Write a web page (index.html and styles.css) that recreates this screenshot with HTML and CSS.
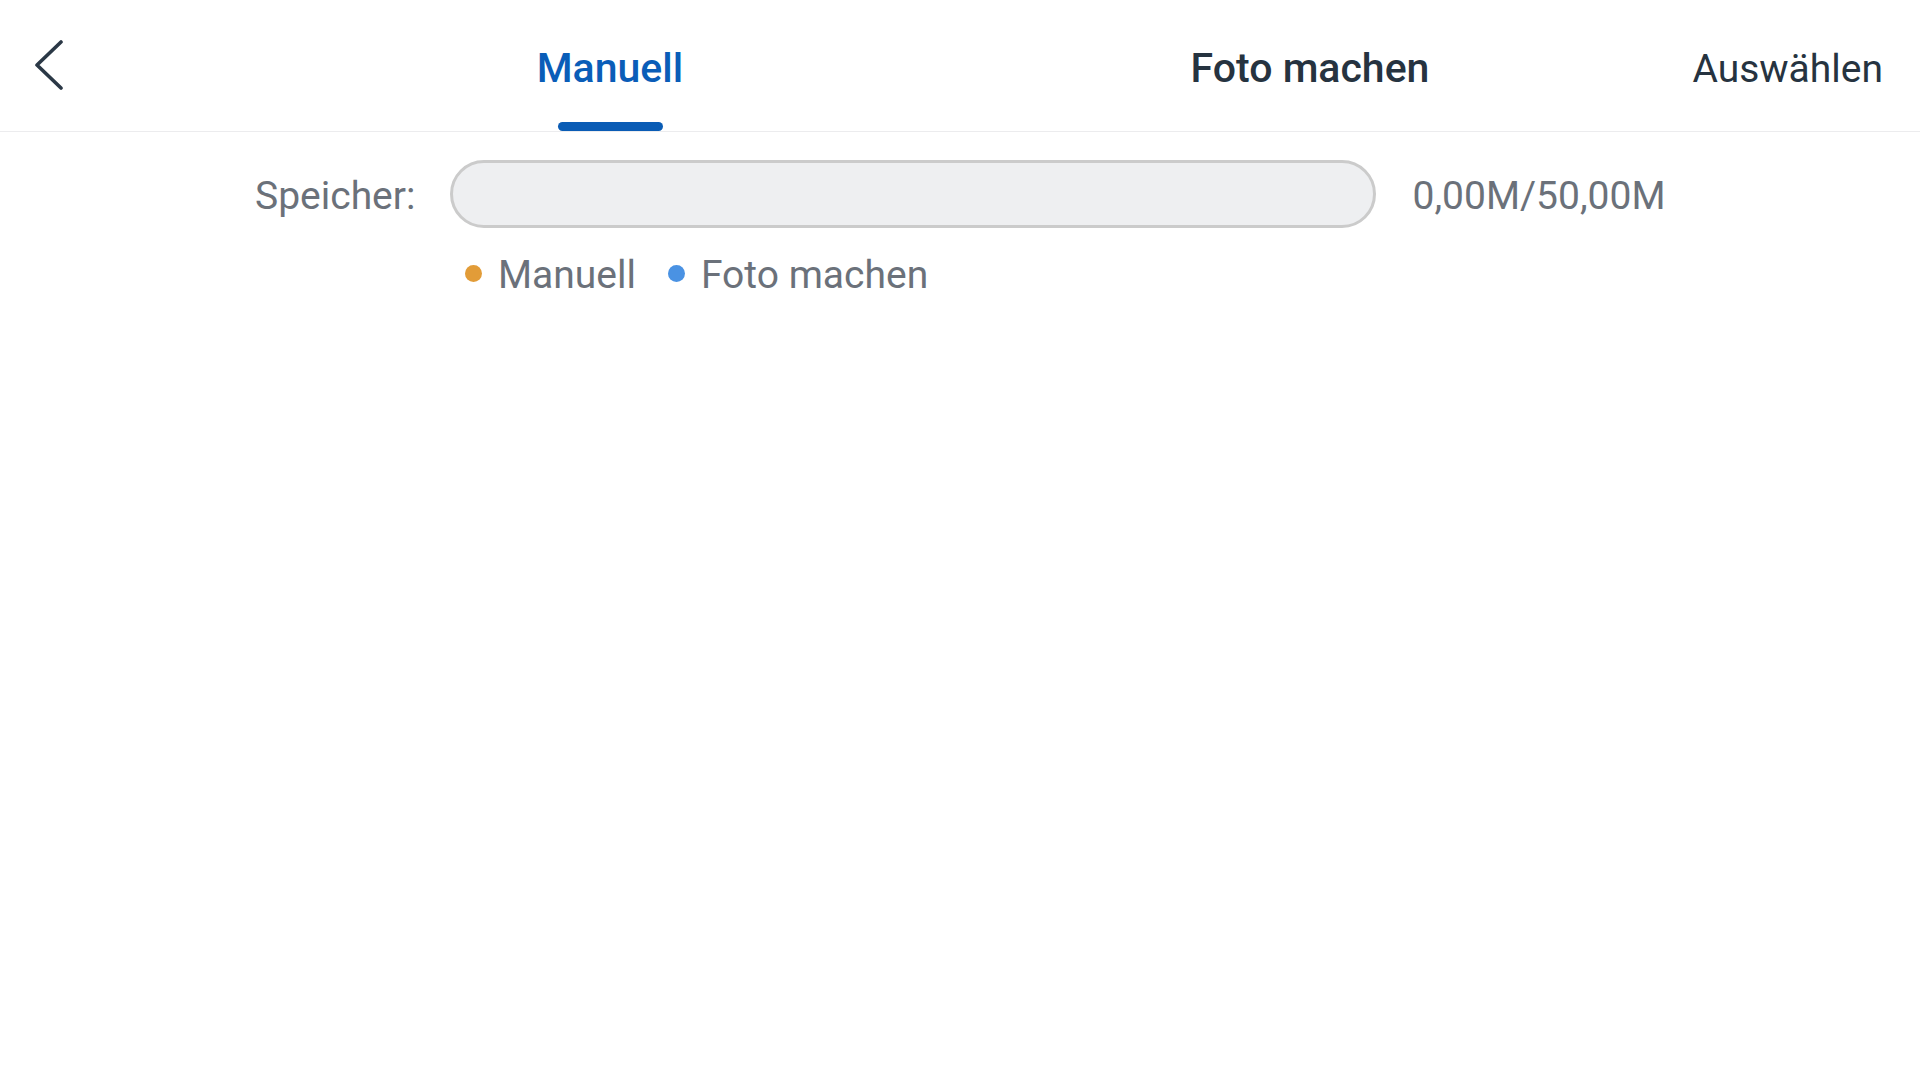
FILE: index.html
```html
<!DOCTYPE html>
<html lang="de">
<head>
<meta charset="utf-8">
<title>Speicher</title>
<link rel="stylesheet" href="styles.css">
</head>
<body>
<header class="topbar">
  <div class="back">
    <svg class="back-icon" width="32" height="50" viewBox="0 0 32 50" aria-hidden="true">
      <path d="M28 2 L4 25 L28 48" fill="none" stroke="#2b3846" stroke-width="3.6" stroke-linecap="round" stroke-linejoin="round"/>
    </svg>
  </div>
  <nav class="tabs">
    <div class="tab tab-active"><span class="tab-label">Manuell</span><span class="tab-indicator"></span></div>
    <div class="tab"><span class="tab-label">Foto machen</span><span class="tab-indicator tab-indicator-hidden"></span></div>
  </nav>
  <div class="action">Auswählen</div>
</header>
<main class="content">
  <div class="storage-row">
    <span class="storage-label">Speicher:</span>
    <div class="storage-bar"></div>
    <span class="storage-value">0,00M/50,00M</span>
  </div>
  <div class="legend">
    <span class="legend-item"><span class="dot dot-orange"></span>Manuell</span>
    <span class="legend-item"><span class="dot dot-blue"></span>Foto machen</span>
  </div>
</main>
</body>
</html>
```
FILE: styles.css
```css
html, body {
  margin: 0;
  padding: 0;
  background: #ffffff;
  font-family: Roboto, "Noto Sans", "Liberation Sans", sans-serif;
}

.topbar {
  display: flex;
  align-items: flex-start;
  height: 131px;
  border-bottom: 1px solid #ececee;
}

.back {
  width: 260px;
  flex: 0 0 260px;
  padding-top: 40px;
  padding-left: 33px;
  box-sizing: border-box;
}

.back-icon {
  display: block;
}

.tabs {
  display: flex;
  width: 1400px;
  flex: 0 0 1400px;
}

.tab {
  flex: 1;
  display: flex;
  flex-direction: column;
  align-items: center;
  height: 131px;
  padding-top: 46px;
  box-sizing: border-box;
}

.tab-label {
  font-size: 41px;
  line-height: 44px;
  font-weight: 500;
  color: #263340;
}

.tab-active .tab-label {
  color: #0a5db8;
}

.tab-indicator {
  display: block;
  width: 105px;
  height: 9px;
  margin-top: 32px;
  border-radius: 5px;
  background: #0a5cb5;
}

.tab-indicator-hidden {
  visibility: hidden;
}

.action {
  flex: 1;
  text-align: right;
  padding-right: 37px;
  padding-top: 47px;
  font-size: 39px;
  line-height: 44px;
  color: #263340;
}

.content {
  padding-top: 28px;
}

.storage-row {
  display: flex;
  align-items: center;
  padding-left: 255px;
}

.storage-label {
  font-size: 39px;
  color: #6b717a;
  margin-right: 35px;
  padding-top: 4px;
}

.storage-bar {
  width: 926px;
  height: 68px;
  box-sizing: border-box;
  border: 3px solid #cbcbcb;
  border-radius: 34px;
  background: #eeeff1;
}

.storage-value {
  font-size: 39px;
  color: #6b717a;
  margin-left: 36px;
  padding-top: 4px;
}

.legend {
  display: flex;
  gap: 32px;
  padding-left: 465px;
  margin-top: 24px;
}

.legend-item {
  display: flex;
  align-items: center;
  font-size: 39px;
  line-height: 46px;
  color: #6b717a;
}

.dot {
  width: 17px;
  height: 17px;
  border-radius: 50%;
  margin-right: 16px;
  margin-top: -4px;
}

.dot-orange {
  background: #e29c38;
}

.dot-blue {
  background: #4a92e3;
}
```
